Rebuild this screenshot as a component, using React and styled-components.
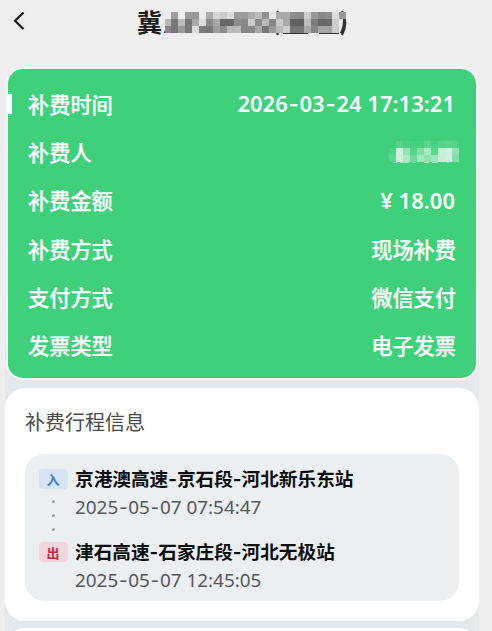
import React from 'react'
import styled, { createGlobalStyle } from 'styled-components'

const GlobalStyle = createGlobalStyle`
* { box-sizing: border-box; }
body {
    margin: 0;
    background: #eeeeef;
    font-family: Inter, "Noto Sans CJK SC", sans-serif;
    overflow: hidden;
}
`

const Page = styled.div`
width: 492px;
height: 631px;
overflow: hidden;
`

const Header = styled.header`
height: 67px;
display: flex;
align-items: flex-start;
padding: 7px 0 0 13px;
`

const BackIcon = styled.svg`
width: 14px;
height: 20px;
margin-top: 4px;
`

const PlateTitle = styled.h1`
margin: 1px 0 0 110px;
display: flex;
font-size: 25px;
line-height: 30px;
font-weight: 700;
color: #1b1b1b;
`

const Mask = styled.svg`
display: block;
flex: none;
margin: ${({ $margin }) => $margin || 0};
`

const Sheet = styled.main`
width: 474px;
margin-left: 5px;
background: linear-gradient(#eeeeef 0, #ebecee 200px, #e5e8eb 320px);
border-radius: 18px 18px 0 0;
`

const PayCard = styled.section`
width: 472px;
height: 313px;
margin-left: 1px;
padding: 10px 20px 0 20px;
background: #40d07b;
border: 2px solid #f3fdf7;
border-radius: 17px;
position: relative;

&::before {
    content: "";
    position: absolute;
    left: 0;
    top: 25px;
    width: 4px;
    height: 20px;
    background: #fff;
}
`

const PayRow = styled.div`
height: 48.2px;
padding-top: 1px;
display: flex;
align-items: center;
justify-content: space-between;
color: #fff;
font-size: 21.2px;
font-weight: 500;
-webkit-text-stroke: 0.25px #fff;
`

const Digits = styled.span`
margin-right: 1px;
font-family: "Noto Sans", sans-serif;
font-size: 22px;
line-height: 28px;
font-weight: 600;
white-space: pre;
-webkit-text-stroke: 0;
`

const Dash = styled.span`
padding: 0 0.035em;
font-family: Inter, sans-serif;
`

const TripCard = styled.section`
height: 233px;
margin-top: 8px;
padding: 21px 20px 0 20px;
background: #fff;
border-radius: 20px;
`

const TripTitle = styled.h2`
margin: 0;
font-size: 20px;
line-height: 28px;
font-weight: 400;
color: #4b4b4b;
`

const TripBox = styled.div`
height: 147px;
margin-top: 17px;
padding: 11px 14px;
background: #eceff2;
border-radius: 19px;
`

const Stop = styled.div`
height: 73px;
display: grid;
grid-template-columns: 28px 1fr;
column-gap: 8px;
`

const Marker = styled.div`
display: flex;
flex-direction: column;
align-items: center;
`

const Tag = styled.span`
width: 29px;
height: 20px;
margin-top: 4px;
display: flex;
align-items: center;
justify-content: center;
border-radius: 4px;
font-size: 13px;
font-weight: 700;
color: ${({ $out }) => ($out ? '#c42a3f' : '#3b7fce')};
background: ${({ $out }) => ($out ? '#f1d5dc' : '#d5e3f2')};
`

const Dot = styled.i`
width: 3px;
height: 3px;
margin-top: 11px;
border-radius: 50%;
background: #9a9da1;
`

const Station = styled.div`
font-size: 18.65px;
line-height: 28px;
font-weight: 700;
color: #0c0d0e;
white-space: nowrap;
`

const Time = styled.div`
font-family: "Noto Sans", sans-serif;
font-size: 18.9px;
line-height: 28px;
color: #55585b;
`

const NextCard = styled.section`
height: 40px;
margin-top: 7px;
background: #fff;
border-radius: 20px;
`

// grey level of every mosaic cell, row by row
const plateCells = [
    'ee a0 ec 9b 99 ec aa d5 cb dc 9a 9a ac bc 90 e4 a8 a8 8c 8a cc 98 88 8c dc 98',
    'b8 78 bc 76 a8 de 8a a8 66 68 8c 88 cc 8c b8 86 c8 a8 62 60 bc 7c 66 68 cc dc',
    '88 78 98 78 dc 7c 78 9c 8c b8 bc 88 88 a8 78 98 b8 cc 74 76 a8 88 a4 a4 cc e8',
].map((row) => row.split(' '))

// opacity of the white cells over the green card
const nameCells = [
    [0, 0.12, 0.05, 0.03, 0.05, 0.12, 0.05, 0.12, 0.14, 0.08],
    [0.08, 0.75, 0.42, 0.12, 0.32, 0.56, 0.15, 0.7, 0.72, 0.4],
    [0.14, 0.72, 0.55, 0.22, 0.5, 0.42, 0.48, 0.68, 0.74, 0.34],
]

function PlateMask() {
    return (
        <Mask width="186" height="30" viewBox="0 0 186 30" $margin="0 0 0 2px">
            <path d="M0 25 L2 19 L5 25 Z M119 25 h25 v1 h-25 z M155 25 h20 v1 h-20 z" fill="#333" />
            <path d="M114 3 Q108 14 114 27 M178 3 Q184.5 14 178 27" fill="none" stroke="#333" strokeWidth="2.2" />
            <g shapeRendering="crispEdges">
                {plateCells.map((row, y) => row.map((c, x) => (
                    x === 25 && y > 0 ? null :
                        <rect
                            key={`${x}-${y}`}
                            x={Math.round(0.5 + x * 6.96)}
                            y={4 + y * 7}
                            width="7"
                            height="7"
                            fill={`#${c}${c}${c}`}
                        />
                )))}
            </g>
            <path d="M180 11 Q180.5 18 177 25.5" fill="none" stroke="#333" strokeWidth="2.2" />
        </Mask>
    )
}

function NameMask() {
    return (
        <Mask width="70" height="22" viewBox="0 0 70 22" shapeRendering="crispEdges" $margin="0 -3px 0 0">
            {nameCells.map((row, y) => row.map((o, x) => (
                <rect key={`${x}-${y}`} x={x * 7} y={y * 7} width="7" height="7" fill="#fff" opacity={o} />
            )))}
            <path d="M4 21.5h4 M11 21.5h9 M24 21.5h3 M35 21.5h5 M43 21.5h6 M58 21.5h2" stroke="#a5e8c0" strokeWidth="1" />
        </Mask>
    )
}

const payInfo = [
    { label: '补费时间', value: '2026-03-24 17:13:21', digits: true },
    { label: '补费人', masked: true },
    { label: '补费金额', value: '¥ 18.00', digits: true },
    { label: '补费方式', value: '现场补费' },
    { label: '支付方式', value: '微信支付' },
    { label: '发票类型', value: '电子发票' },
]

const stops = [
    { tag: '入', name: '京港澳高速-京石段-河北新乐东站', time: '2025-05-07 07:54:47' },
    { tag: '出', name: '津石高速-石家庄段-河北无极站', time: '2025-05-07 12:45:05', out: true },
]

// dates get the wider dash
function DateText({ value }) {
    return value.split('-').map((part, i) => (
        <React.Fragment key={i}>
            {i > 0 && <Dash>-</Dash>}
            {part}
        </React.Fragment>
    ))
}

function PayValue({ item }) {
    if (item.masked) {
        return <NameMask />
    }
    return item.digits ? <Digits><DateText value={item.value} /></Digits> : <span>{item.value}</span>
}

function App() {
    return (
        <Page>
            <GlobalStyle />
            <Header>
                <BackIcon viewBox="0 0 14 20">
                    <path d="M10.5 1.5 L2 9.8 L10.5 18" fill="none" stroke="#1a1a1a" strokeWidth="2.2" />
                </BackIcon>
                <PlateTitle>
                    冀
                    <PlateMask />
                </PlateTitle>
            </Header>
            <Sheet>
                <PayCard>
                    {payInfo.map((item) => (
                        <PayRow key={item.label}>
                            <span>{item.label}</span>
                            <PayValue item={item} />
                        </PayRow>
                    ))}
                </PayCard>
                <TripCard>
                    <TripTitle>补费行程信息</TripTitle>
                    <TripBox>
                        {stops.map((stop) => (
                            <Stop key={stop.tag}>
                                <Marker>
                                    <Tag $out={stop.out}>{stop.tag}</Tag>
                                    {!stop.out && <><Dot /><Dot /><Dot /></>}
                                </Marker>
                                <div>
                                    <Station>{stop.name}</Station>
                                    <Time><DateText value={stop.time} /></Time>
                                </div>
                            </Stop>
                        ))}
                    </TripBox>
                </TripCard>
                <NextCard />
            </Sheet>
        </Page>
    )
}

export default App
